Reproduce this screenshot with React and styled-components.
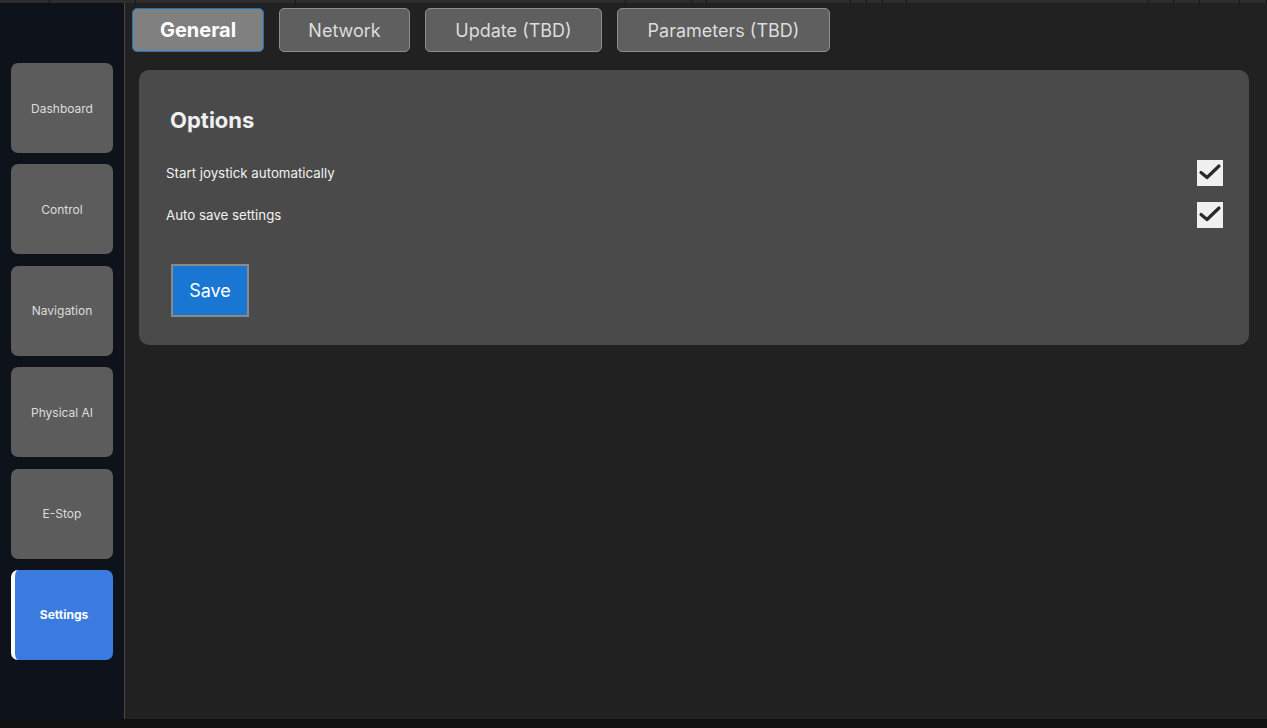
import React, { useState } from 'react'
import styled, { createGlobalStyle } from 'styled-components'

const GlobalStyle = createGlobalStyle`
  html, body { margin: 0; padding: 0; height: 100%; background: #111111; }
  body { font-family: Inter, "Noto Sans", "DejaVu Sans", sans-serif; }
  #root { height: 100%; }
`

const topSegments = [50, 86, 160, 330, 66, 15, 144, 16, 16, 24, 242, 25, 26, 40, 27]

const sideItems = ['Dashboard', 'Control', 'Navigation', 'Physical AI', 'E-Stop', 'Settings']
const tabs = [
  { label: 'General', width: 132 },
  { label: 'Network', width: 131 },
  { label: 'Update (TBD)', width: 177 },
  { label: 'Parameters (TBD)', width: 213 },
]

export default function App() {
  const [active, setActive] = useState('Settings')
  const [tab, setTab] = useState('General')
  const [opts, setOpts] = useState({ joystick: true, autosave: true })

  function toggle(key) {
    setOpts(prev => ({ ...prev, [key]: !prev[key] }))
  }

  return (
    <>
      <GlobalStyle />
      <Shell>
        <TopStrip>
          {topSegments.map((w, i) => <Segment key={'seg' + i} $w={w} />)}
        </TopStrip>
        <Body>
          <Sidebar>
            {sideItems.map(item => (
              <NavButton key={item} $active={active === item} onClick={() => setActive(item)}>
                {item}
              </NavButton>
            ))}
          </Sidebar>
          <Main>
            <TabBar>
              {tabs.map(t => (
                <Tab key={t.label} $w={t.width} $active={tab === t.label} onClick={() => setTab(t.label)}>
                  {t.label}
                </Tab>
              ))}
            </TabBar>
            <Card>
              <Title>Options</Title>
              <OptionRow>
                <span>Start joystick automatically</span>
                <Check checked={opts.joystick} onClick={() => toggle('joystick')} />
              </OptionRow>
              <OptionRow>
                <span>Auto save settings</span>
                <Check checked={opts.autosave} onClick={() => toggle('autosave')} />
              </OptionRow>
              <SaveButton>Save</SaveButton>
            </Card>
          </Main>
        </Body>
        <BottomStrip />
      </Shell>
    </>
  )
}

function Check({ checked, onClick }) {
  return (
    <CheckBox onClick={onClick}>
      {checked && (
        <svg width="26" height="26" viewBox="0 0 26 26">
          <polyline points="4,12.5 10,17.5 22,6" fill="none" stroke="#2a2a2a" strokeWidth="3.2" strokeLinecap="round" strokeLinejoin="round" />
        </svg>
      )}
    </CheckBox>
  )
}

const Shell = styled.div`
  width: 1267px;
  height: 728px;
  display: flex;
  flex-direction: column;
  overflow: hidden;
  background: #111111;
`

const TopStrip = styled.div`
  height: 3px;
  display: flex;
  background: #1a1a1a;
  flex-shrink: 0;
`

const Segment = styled.div`
  width: ${p => p.$w}px;
  flex-shrink: 0;
  background: #2d2d2d;
  border-right: 1px solid #151515;
  box-sizing: border-box;
`

const Body = styled.div`
  height: 716px;
  display: flex;
  flex-shrink: 0;
`

const Sidebar = styled.nav`
  width: 125px;
  flex-shrink: 0;
  background: #0e121a;
  border-right: 1px solid #4a4a4a;
  display: flex;
  flex-direction: column;
  gap: 11.4px;
  padding: 60px 12px 0 11px;
  box-sizing: border-box;
`

const NavButton = styled.button`
  width: 102px;
  height: 90px;
  flex-shrink: 0;
  border: none;
  border-radius: 7px;
  background: ${p => (p.$active ? '#3b7be0' : '#5c5c5c')};
  border-left: ${p => (p.$active ? '4px solid #ffffff' : 'none')};
  color: ${p => (p.$active ? '#ffffff' : '#dcdcdc')};
  font-family: Inter, "Noto Sans", sans-serif;
  font-size: 12px;
  font-weight: ${p => (p.$active ? 700 : 400)};
  padding: 0;
  cursor: pointer;
`

const Main = styled.main`
  flex: 1;
  background: #212121;
  display: flex;
  flex-direction: column;
  padding: 5px 18px 0 7px;
  box-sizing: border-box;
`

const TabBar = styled.div`
  display: flex;
  gap: 15px;
  height: 44px;
`

const Tab = styled.button`
  width: ${p => p.$w}px;
  height: 44px;
  box-sizing: border-box;
  border-radius: 5px;
  border: 1px solid ${p => (p.$active ? '#1f73c7' : '#8d8d8d')};
  background: ${p => (p.$active ? '#808080' : '#5f5f5f')};
  color: ${p => (p.$active ? '#ffffff' : '#dddddd')};
  font-family: Inter, "Noto Sans", sans-serif;
  font-size: ${p => (p.$active ? '20px' : '18px')};
  font-weight: ${p => (p.$active ? 700 : 400)};
  padding: 0;
  cursor: pointer;
`

const Card = styled.section`
  margin: 18px 0 0 7px;
  height: 275px;
  box-sizing: border-box;
  background: #4a4a4a;
  border-radius: 10px;
  padding: 36px 26px 0 27px;
  color: #f2f2f2;
`

const Title = styled.h2`
  margin: 0 0 26px 4px;
  font-size: 22px;
  font-weight: 700;
  line-height: 28px;
  color: #f0f0f0;
`

const OptionRow = styled.div`
  display: flex;
  align-items: center;
  justify-content: space-between;
  height: 26px;
  margin-bottom: 16px;
  font-size: 13.3px;
  color: #f2f2f2;
`

const CheckBox = styled.div`
  width: 26px;
  height: 26px;
  background: #f0f0f0;
  display: flex;
  align-items: center;
  justify-content: center;
  cursor: pointer;
`

const SaveButton = styled.button`
  margin: 20px 0 0 5px;
  width: 78px;
  height: 53px;
  box-sizing: border-box;
  background: #1976d2;
  border: 2px solid #8a8a8a;
  color: #ffffff;
  font-family: Inter, "Noto Sans", sans-serif;
  font-size: 18px;
  cursor: pointer;
`

const BottomStrip = styled.div`
  flex: 1;
  background: #111111;
`
